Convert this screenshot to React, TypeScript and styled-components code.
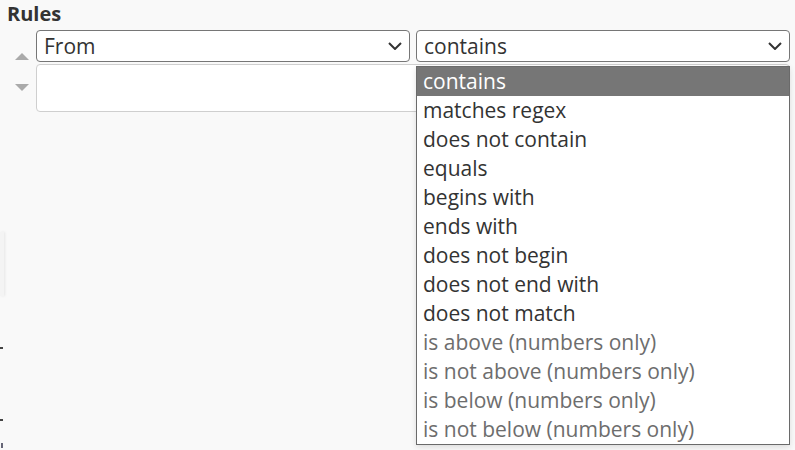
import React from "react";
import styled, { createGlobalStyle } from "styled-components";

const GlobalStyle = createGlobalStyle`
  html, body {
    margin: 0;
    padding: 0;
    background: #f9f9f9;
    font-family: "Open Sans", "Noto Sans", sans-serif;
    color: #333;
  }
`;

const options = [
    { label: "contains", enabled: true },
    { label: "matches regex", enabled: true },
    { label: "does not contain", enabled: true },
    { label: "equals", enabled: true },
    { label: "begins with", enabled: true },
    { label: "ends with", enabled: true },
    { label: "does not begin", enabled: true },
    { label: "does not end with", enabled: true },
    { label: "does not match", enabled: true },
    { label: "is above (numbers only)", enabled: false },
    { label: "is not above (numbers only)", enabled: false },
    { label: "is below (numbers only)", enabled: false },
    { label: "is not below (numbers only)", enabled: false },
];

function Chevron() {
    return (
        <svg width="14" height="8" viewBox="0 0 14 8">
            <path d="M1 1 L7 7 L13 1" fill="none" stroke="#333" strokeWidth="2" />
        </svg>
    );
}

function Arrow({ down }: { down?: boolean }) {
    return (
        <svg width="14" height="7" viewBox="0 0 14 7">
            <path d={down ? "M0 0 H14 L7 7 Z" : "M7 0 L14 7 H0 Z"} fill="#aaa" />
        </svg>
    );
}

export default function App() {
    return (
        <>
            <GlobalStyle />
            <Page>
                <Gutter>
                    <EdgeCard />
                    <EdgeMark $top={51} />
                    <EdgeMark $top={70} />
                    <EdgeTick />
                </Gutter>
                <Main>
                    <Title>Rules</Title>
                    <RuleRow>
                        <Arrows>
                            <Arrow />
                            <Arrow down />
                        </Arrows>
                        <Fields>
                            <SelectRow>
                                <Select>
                                    <span>From</span>
                                    <Chevron />
                                </Select>
                                <SelectWrap>
                                    <Select>
                                        <span>contains</span>
                                        <Chevron />
                                    </Select>
                                    <Dropdown>
                                        {options.map((o, i) => (
                                            <Option key={o.label} $selected={i === 0} $enabled={o.enabled}>
                                                {o.label}
                                            </Option>
                                        ))}
                                    </Dropdown>
                                </SelectWrap>
                            </SelectRow>
                            <TextBox />
                        </Fields>
                    </RuleRow>
                </Main>
            </Page>
        </>
    );
}

const Page = styled.div`
  display: flex;
  width: 795px;
  height: 450px;
  overflow: hidden;
`;

const Gutter = styled.div`
  width: 4px;
  display: flex;
  flex-direction: column;
  padding-top: 232px;
`;

const EdgeCard = styled.div`
  width: 4px;
  height: 64px;
  background: #f4f4f4;
  box-shadow: 1px 0 3px rgba(0, 0, 0, 0.08);
`;

const EdgeMark = styled.div<{ $top: number }>`
  width: 3px;
  height: 2px;
  margin-top: ${(p) => p.$top}px;
  background: #444;
`;

const EdgeTick = styled.div`
  width: 2px;
  height: 5px;
  margin-top: 22px;
  margin-left: 1px;
  background: #667;
`;

const Main = styled.div`
  flex: 1;
  padding: 0 5px 0 3px;
`;

const Title = styled.div`
  font-size: 20px;
  font-weight: 700;
  line-height: 27px;
  color: #333;
  height: 30px;
`;

const RuleRow = styled.div`
  display: flex;
`;

const Arrows = styled.div`
  width: 29px;
  display: flex;
  flex-direction: column;
  align-items: center;
  gap: 24px;
  padding-top: 23px;
`;

const Fields = styled.div`
  flex: 1;
  display: flex;
  flex-direction: column;
  gap: 2px;
`;

const SelectRow = styled.div`
  display: grid;
  grid-template-columns: 1fr 1fr;
  gap: 6px;
`;

const SelectWrap = styled.div`
  position: relative;
`;

const Select = styled.div`
  height: 32px;
  box-sizing: border-box;
  border: 1px solid #767676;
  border-radius: 4px;
  background: #fff;
  display: flex;
  align-items: center;
  justify-content: space-between;
  padding: 0 7px 0 7px;
  font-size: 21px;
  color: #333;
`;

const TextBox = styled.div`
  height: 48px;
  box-sizing: border-box;
  border: 1px solid #cfcfcf;
  border-radius: 4px;
  background: #fff;
`;

const Dropdown = styled.div`
  position: absolute;
  top: 36px;
  left: 0;
  right: 0;
  box-sizing: border-box;
  border: 1px solid #6a6a6a;
  background: #fff;
  box-shadow: 0 2px 6px rgba(0, 0, 0, 0.12);
  z-index: 2;
`;

const Option = styled.div<{ $selected?: boolean; $enabled?: boolean }>`
  height: 29px;
  line-height: 29px;
  padding-left: 6px;
  font-size: 21px;
  white-space: nowrap;
  background: ${(p) => (p.$selected ? "#767676" : "#fff")};
  color: ${(p) => (p.$selected ? "#fff" : p.$enabled ? "#333" : "#6d6d6d")};
`;
